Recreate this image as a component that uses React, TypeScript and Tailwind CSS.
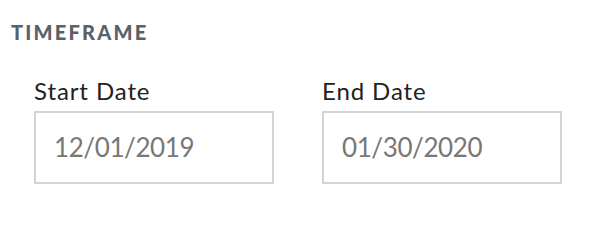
export default function App() {
  return (
    <div className="w-[590px] h-[242px] bg-white pt-[20px] pl-[11px] font-['Lato',sans-serif]">
      <div className="text-[20px] font-black text-[#5b6168] tracking-[2.2px] leading-[24px]">TIMEFRAME</div>
      <div className="flex gap-[48px] pl-[23px] mt-[33px]">
        {[
          ["Start Date", "12/01/2019"],
          ["End Date", "01/30/2020"],
        ].map(([label, value]) => (
          <div key={label} className="flex flex-col w-[240px]">
            <div className="text-[24px] leading-[28px] tracking-[0.9px] text-[#222]">{label}</div>
            <div className="mt-[6px] h-[73px] border-2 border-[#d4d4d4] flex items-center pl-[18px] text-[26px] tracking-[-0.4px] text-[#777]">
              {value}
            </div>
          </div>
        ))}
      </div>
    </div>
  );
}
